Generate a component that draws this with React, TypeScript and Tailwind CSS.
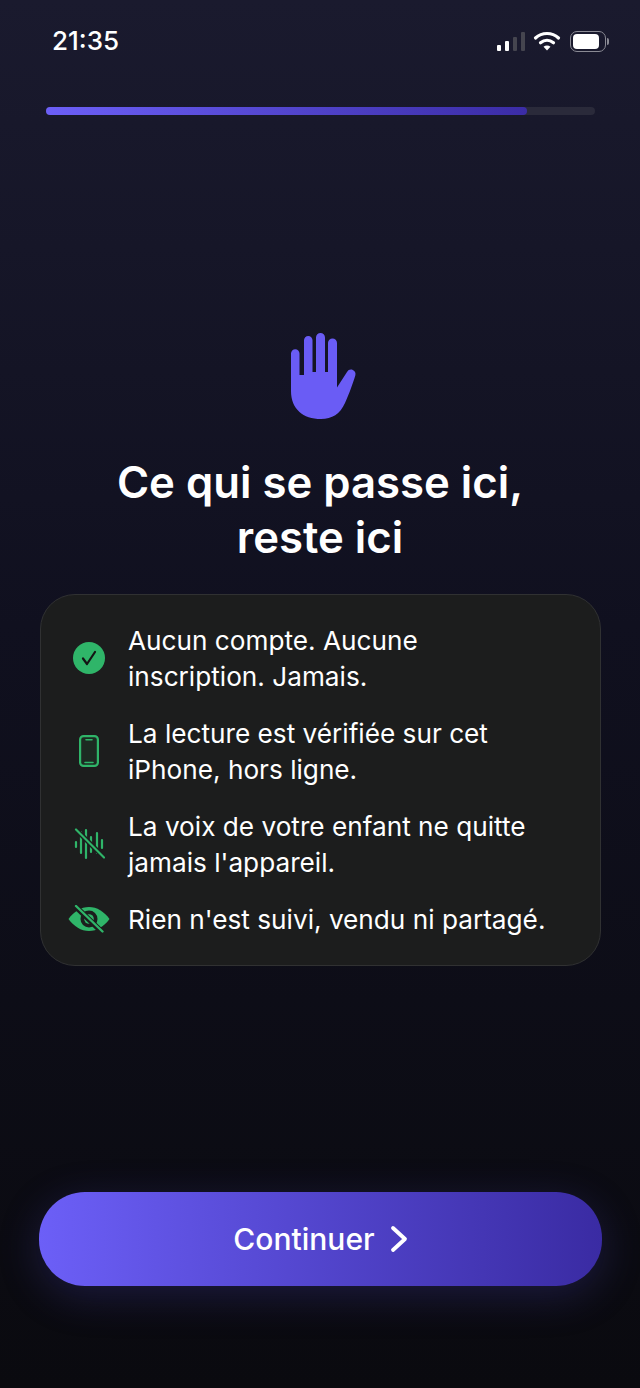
import React from "react"

const font = { fontFamily: "Inter, 'Noto Sans', sans-serif" }

function CheckIcon() {
  return (
    <svg width="32" height="32" viewBox="0 0 32 32">
      <circle cx="16" cy="16" r="16" fill="#2fb569" />
      <path d="M10 16.5l4 5.5 8-12" fill="none" stroke="#141414" strokeWidth="2.2" strokeLinecap="round" strokeLinejoin="round" />
    </svg>
  )
}

function PhoneIcon() {
  return (
    <svg width="20" height="32" viewBox="0 0 20 32" fill="none" stroke="#2fb569">
      <rect x="1.1" y="1.1" width="17.8" height="29.8" rx="3.5" strokeWidth="2.2" fill="#1d2a22" />
      <path d="M7 4.800h6M6 27.500h8" strokeWidth="1.6" strokeLinecap="round" />
    </svg>
  )
}

function VoiceOffIcon() {
  return (
    <svg width="32" height="32" viewBox="0 0 32 32" fill="none" stroke="#2fb569" strokeWidth="2.2" strokeLinecap="round">
      <path d="M3 14v5M8 4v21M13 2v28M18 9v15M24 5v20M29 12v8" />
      <path d="M3 1.500l28 28" strokeWidth="5" stroke="#1c1d1d" strokeLinecap="butt" />
      <path d="M3 1.500l28 28" />
    </svg>
  )
}

function EyeOffIcon() {
  return (
    <svg width="42" height="28" viewBox="0 0 42 28">
      <path d="M0.500 14C6 6.500 13 2 21 2S36 6.500 41.500 14C36 21.500 29 26 21 26S6 21.500 0.500 14Z" fill="#2fb569" />
      <circle cx="21" cy="14" r="8.500" fill="#1c1d1d" />
      <circle cx="21" cy="14" r="4.800" fill="#2fb569" />
      <path d="M7 1l27 26" stroke="#1c1d1d" strokeWidth="5.500" />
      <path d="M8 1l26.500 25.500" stroke="#2fb569" strokeWidth="2.400" strokeLinecap="round" />
    </svg>
  )
}

function HandIcon() {
  return (
    <svg width="66" height="86" viewBox="0 0 66 86" fill="#6a5cf5">
      <path d="M0 20.500a4.250 4.250 0 0 1 8.500 0V42H13V7.250a4.250 4.250 0 0 1 8.500 0V39H25V4.500a4.500 4.500 0 0 1 9 0V39h3V10a4.500 4.500 0 0 1 9 0v44.500l10-15.500c1.300-2.200 3.600-3 5.800-2 2.300 1 3.200 3.200 2.500 5.500C62 50 58.500 60 54 70 49 81 41 86 30 86 12 86 0 76 0 58Z" />
    </svg>
  )
}

function StatusIcons() {
  return (
    <div className="flex items-center gap-[8px]">
      <div className="flex items-end gap-[4px] h-[19px] mt-[1px]">
        <div className="w-[4px] h-[6px] rounded-[1px] bg-white" />
        <div className="w-[4px] h-[10px] rounded-[1px] bg-white" />
        <div className="w-[4px] h-[14px] rounded-[1px] bg-[#45454f]" />
        <div className="w-[4px] h-[19px] rounded-[1px] bg-[#45454f]" />
      </div>
      <svg width="28" height="22" viewBox="0 0 28 22" fill="none" stroke="#fff" strokeWidth="3.2" strokeLinecap="round">
        <path d="M2.500 8C9 2 19 2 25.500 8" />
        <path d="M7.500 12.800C11.500 9.500 16.500 9.500 20.500 12.800" />
        <path d="M14 20.500l-3.500-3.800c2-1.500 5-1.500 7 0Z" fill="#fff" stroke="none" />
      </svg>
      <div className="ml-[1px] flex items-center gap-[1px]">
        <div className="w-[36px] h-[21px] rounded-[7px] border-[1.5px] border-[#8a8a94] p-[2px]">
          <div className="w-[26px] h-full rounded-[4px] bg-white" />
        </div>
        <div className="w-[2px] h-[7px] rounded-r-full bg-[#8a8a94]" />
      </div>
    </div>
  )
}

const rows = [
  { icon: <CheckIcon />, lines: ["Aucun compte. Aucune", "inscription. Jamais."] },
  { icon: <PhoneIcon />, lines: ["La lecture est vérifiée sur cet", "iPhone, hors ligne."] },
  { icon: <VoiceOffIcon />, lines: ["La voix de votre enfant ne quitte", "jamais l'appareil."] },
  { icon: <EyeOffIcon />, lines: ["Rien n'est suivi, vendu ni partagé."] },
]

export default function App() {
  return (
    <div style={font} className="w-[640px] h-[1388px] flex flex-col overflow-hidden bg-gradient-to-b from-[#1a1a2e] via-[#10101f] via-45% to-[#0a0a0f] text-white">
      {/* Status bar */}
      <div className="flex items-center justify-between pl-[52px] pr-[31px] pt-[26px] h-[56px]">
        <span className="text-[26px] leading-[30px] font-medium">21:35</span>
        <StatusIcons />
      </div>

      {/* Progress */}
      <div className="mx-[46px] mt-[51px] h-[8px] w-[549px] rounded-full bg-[#2a2a3a]">
        <div className="h-full w-[481px] rounded-full bg-gradient-to-r from-[#6c5ff7] to-[#3b2ca6]" />
      </div>

      <div className="flex justify-center mt-[218px] pl-[7px]">
        <HandIcon />
      </div>

      <h1 className="mt-[36px] text-center text-[43.7px] leading-[55px] font-semibold">
        Ce qui se passe ici,
        <br />
        reste ici
      </h1>

      {/* Privacy card */}
      <div className="ml-[40px] mt-[29px] w-[561px] flex flex-col gap-[21px] rounded-[35px] border-[1.5px] border-[#303132] bg-[#1c1d1d] pl-[27px] pr-[26px] pt-[27px] pb-[28px]">
        {rows.map((row) => (
          <div key={row.lines[0]} className="flex items-center gap-[18px]">
            <div className="w-[42px] shrink-0 flex justify-center">{row.icon}</div>
            <p className="text-[26.2px] leading-[36px] font-normal translate-y-[1px]">
              {row.lines.map((line) => (
                <span key={line} className="block">{line}</span>
              ))}
            </p>
          </div>
        ))}
      </div>

      {/* CTA */}
      <button className="mx-[39px] mt-[226px] h-[94px] w-[563px] rounded-[46px] flex items-center justify-center gap-[15px] bg-gradient-to-r from-[#6c5ff7] to-[#3a2ba3] shadow-[0_10px_40px_rgba(80,70,200,0.25)]">
        <span className="text-[30px] leading-[36px] font-[550]">Continuer</span>
        <svg width="18" height="28" viewBox="0 0 18 28" fill="none" stroke="#fff" strokeWidth="3.8" strokeLinecap="round" strokeLinejoin="round">
          <path d="M3 3l12 11L3 25" />
        </svg>
      </button>
    </div>
  )
}
